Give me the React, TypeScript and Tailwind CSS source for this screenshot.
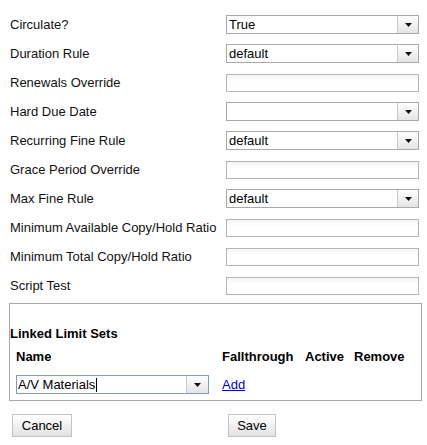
import React from "react";

type Row = { label: string; kind: "select" | "input"; value?: string };

const rows: Row[] = [
  { label: "Circulate?", kind: "select", value: "True" },
  { label: "Duration Rule", kind: "select", value: "default" },
  { label: "Renewals Override", kind: "input" },
  { label: "Hard Due Date", kind: "select", value: "" },
  { label: "Recurring Fine Rule", kind: "select", value: "default" },
  { label: "Grace Period Override", kind: "input" },
  { label: "Max Fine Rule", kind: "select", value: "default" },
  { label: "Minimum Available Copy/Hold Ratio", kind: "input" },
  { label: "Minimum Total Copy/Hold Ratio", kind: "input" },
  { label: "Script Test", kind: "input" },
];

const Arrow = () => (
  <svg width="7" height="4" viewBox="0 0 7 4">
    <path d="M0 0h7L3.5 4z" fill="#111" />
  </svg>
);

const SelectBox = ({ value }: { value: string }) => (
  <div className="w-[193px] h-[19px] border border-[#a9a9a9] flex bg-white">
    <span className="flex-1 pl-[2px] leading-[17px] text-black">{value}</span>
    <div className="w-[21px] border-l border-[#c9c9c9] bg-linear-to-b from-white to-[#e4e4e4] flex items-center justify-center">
      <Arrow />
    </div>
  </div>
);

const TextBox = () => (
  <div className="w-[193px] h-[18px] border border-[#b5b5b5] bg-linear-to-b from-[#f4f4f4] to-white to-40%" />
);

export default function App() {
  return (
    <div
      className="w-[427px] h-[445px] bg-white text-[13px] text-[#111]"
      style={{ fontFamily: '"Liberation Sans", Arial, sans-serif' }}
    >
      <div className="pt-[10px]">
        {rows.map((r) => (
          <div key={r.label} className="h-[29px] flex items-center">
            <span className="w-[226px] pl-[10px]">{r.label}</span>
            {r.kind === "select" ? <SelectBox value={r.value ?? ""} /> : <TextBox />}
          </div>
        ))}
      </div>

      {/* Linked limit sets */}
      <div className="ml-[9px] mt-[3px] w-[413px] border border-[#a9a9a9] pt-[22px] pb-[6px]">
        <div className="font-bold leading-[16px] text-black">Linked Limit Sets</div>
        <div className="flex font-bold leading-[16px] mt-[7px] text-black">
          <span className="w-[212px] pl-[6px]">Name</span>
          <span className="w-[83px]">Fallthrough</span>
          <span className="w-[49px]">Active</span>
          <span>Remove</span>
        </div>
        <div className="flex items-center mt-[10px]">
          <div className="w-[212px] pl-[6px]">
            <div className="w-[193px] h-[19px] border border-[#7f9db9] flex bg-white">
              <span className="flex-1 pl-[1px] leading-[17px] text-black flex items-center">
                A/V Materials
                <span className="inline-block w-px h-[14px] bg-black ml-px" />
              </span>
              <div className="w-[22px] border-l border-[#c9c9c9] bg-linear-to-b from-white to-[#e4e4e4] flex items-center justify-center">
                <Arrow />
              </div>
            </div>
          </div>
          <a href="#" className="text-[#0000cc] underline leading-[16px]">
            Add
          </a>
        </div>
      </div>

      <div className="flex mt-[13px]">
        <div className="w-[228px] pl-[12px]">
          <button className="h-[23px] w-[60px] border border-[#c3c3c3] bg-linear-to-b from-white to-[#e2e2e2] text-black">
            Cancel
          </button>
        </div>
        <button className="h-[23px] w-[48px] border border-[#c3c3c3] bg-linear-to-b from-white to-[#e2e2e2] text-black">
          Save
        </button>
      </div>
    </div>
  );
}
